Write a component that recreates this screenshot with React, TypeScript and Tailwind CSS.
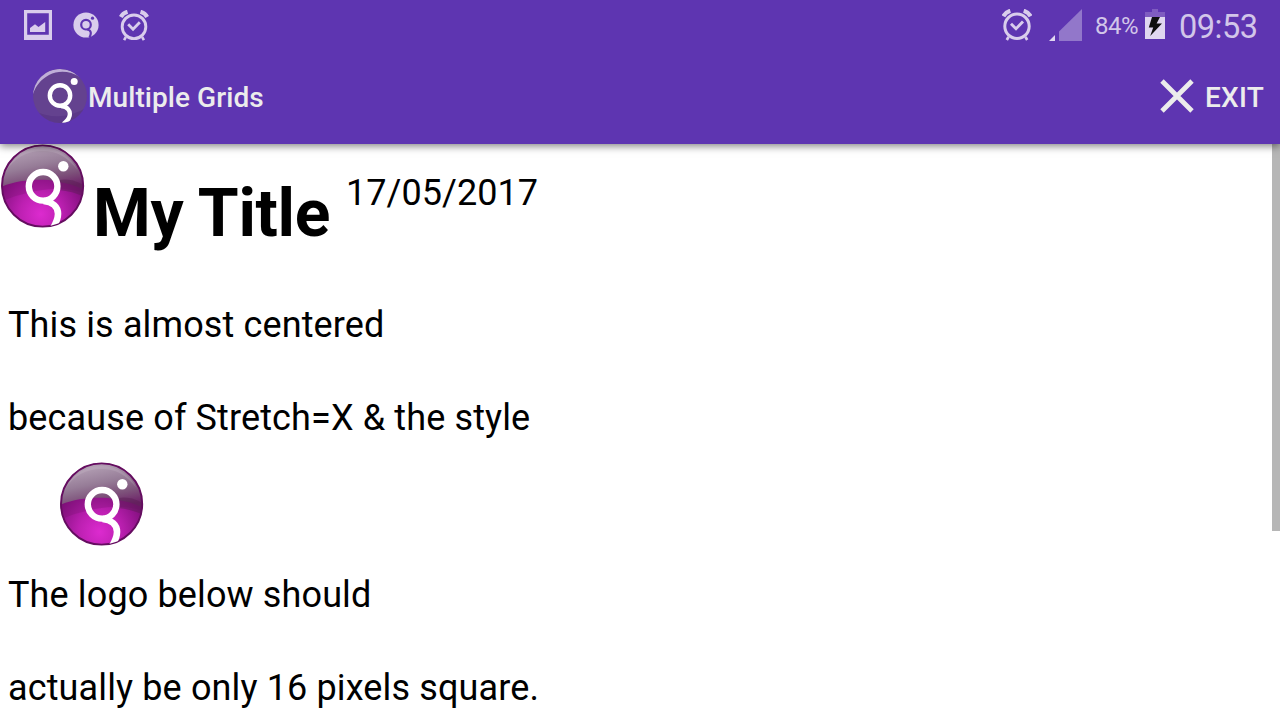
import React from "react";

function Logo({ id }: { id: string }) {
  return (
    <svg className="block h-[84px] w-[85px] shrink-0" viewBox="-0.6 0 85 84">
      <defs>
        <radialGradient id={`${id}-base`} gradientUnits="userSpaceOnUse" cx="40" cy="70" r="52">
          <stop offset="0" stopColor="#dc2bcf" />
          <stop offset="0.4" stopColor="#bd20b2" />
          <stop offset="0.75" stopColor="#93148d" />
          <stop offset="1" stopColor="#760c72" />
        </radialGradient>
        <linearGradient id={`${id}-gloss`} gradientUnits="userSpaceOnUse" x1="32" y1="0" x2="42" y2="48">
          <stop offset="0" stopColor="#b9a7ba" />
          <stop offset="0.45" stopColor="#967c97" />
          <stop offset="0.75" stopColor="#7c4f79" />
          <stop offset="1" stopColor="#6e2269" />
        </linearGradient>
        <clipPath id={`${id}-clip`}>
          <circle cx="42" cy="42" r="40.5" />
        </clipPath>
      </defs>
      <circle cx="42" cy="42" r="41" fill={`url(#${id}-base)`} />
      <g clipPath={`url(#${id}-clip)`}>
        <path d="M0 0H84V49C66 43 48 44 30 48C18 51 8 54 0 58Z" fill="#711069" opacity="0.25" />
        <path d="M0 0H84V46C72 40 60 38 48 36C30 35 15 37 0 43Z" fill={`url(#${id}-gloss)`} />
        <path d="M5 28C12 12 26 4 42 4C57 4 70 12 77 26C66 12 55 7 42 7C27 7 14 13 5 28Z" fill="#d0c3d0" opacity="0.22" />
        <path d="M58 36C70 34 78 38 84 42V53C76 49 68 47 58 46Z" fill="#581c52" opacity="0.45" />
      </g>
      <circle cx="42" cy="42" r="40.6" fill="none" stroke="#650d60" strokeWidth="1.9" />
      <g clipPath={`url(#${id}-clip)`}>
        <circle cx="42.5" cy="42.3" r="14.3" fill="none" stroke="#fff" strokeWidth="6.4" />
        <path d="M43 57C52 58 57.5 63 57.4 70C57.4 75 55.5 79 52 85" fill="none" stroke="#fff" strokeWidth="6.6" />
      </g>
      <circle cx="62.7" cy="22.3" r="5.2" fill="#fff" />
    </svg>
  );
}

function AppIcon() {
  return (
    <svg className="block h-[56px] w-[56px] shrink-0" viewBox="0 0 56 56">
      <defs>
        <clipPath id="bar-clip">
          <circle cx="28" cy="28" r="27" />
        </clipPath>
      </defs>
      <circle cx="28" cy="28" r="27" fill="#64428f" />
      <g clipPath="url(#bar-clip)">
        <path d="M0 42Q28 56 56 39V56H0Z" fill="#553284" opacity="0.6" />
        <path d="M1 26C1 11 13 1 28 1C36 1 43 4 48 9C38 3 27 2 17 7C8 12 4 18 1 26Z" fill="#c0afd8" />
        <circle cx="28" cy="27.5" r="10.2" fill="none" stroke="#fff" strokeWidth="4.4" />
        <path d="M29 38.2C36 38.5 38.5 43 37.7 47.5C37.2 50.5 35.2 53 31.5 56" fill="none" stroke="#fff" strokeWidth="4.3" />
      </g>
      <circle cx="42.2" cy="13.5" r="3.5" fill="#fff" />
    </svg>
  );
}

function Alarm({ className }: { className: string }) {
  return (
    <svg className={className} viewBox="0 0 30 32" fill="none" stroke="#d9cdec">
      <circle cx="15" cy="17.3" r="12.2" strokeWidth="3" />
      <path d="M9 14.8L14 19.8L21 12.6" strokeWidth="2.9" />
      <path d="M1.4 7.2Q3.5 3.2 8.3 1.8M28.6 7.2Q26.5 3.2 21.7 1.8" strokeWidth="4.2" />
      <path d="M6.5 28L4.8 31M23.5 28L25.2 31" strokeWidth="2.7" />
    </svg>
  );
}

function StatusBar() {
  return (
    <div className="flex h-[50px] items-start justify-between pl-6 pr-[21px] text-[#d2c6e9]">
      <div className="flex items-start">
        <svg className="mt-[10px] block h-[30px] w-7" viewBox="0 0 28 30">
          <path fillRule="evenodd" fill="#d9cdec" d="M0 0H28V30H0ZM3.2 3.2V24.8H24.8V3.2Z" />
          <path d="M6 22V18L11 14.2L14.5 17L21.2 12V22Z" fill="#d9cdec" />
        </svg>
        <svg className="ml-[21px] mt-3 block h-[26px] w-[26px]" viewBox="0 0 26 26">
          <circle cx="13" cy="13" r="12.6" fill="#d9cdec" />
          <circle cx="13" cy="12.7" r="4.8" fill="none" stroke="#5e35b1" strokeWidth="2.2" />
          <path d="M14 17.5C18 18 18.8 21 16.5 25.5" fill="none" stroke="#5e35b1" strokeWidth="2.2" />
          <circle cx="19.5" cy="6.2" r="1.6" fill="#5e35b1" />
        </svg>
        <Alarm className="ml-5 mt-2.5 block h-[31px] w-[30px]" />
      </div>
      <div className="flex items-start">
        <Alarm className="mt-[9px] block h-8 w-[30px]" />
        <svg className="ml-4 mt-[9px] block h-8 w-[34px]" viewBox="0 0 34 32">
          <path d="M34 0V32H11V22.5Z" fill="#9277ca" />
          <path d="M7 26V32H1Z" fill="#e0d7f0" />
        </svg>
        <span className="ml-[13px] mt-[11px] w-[50px] whitespace-nowrap text-[24px] leading-[30px] tracking-[-0.45px]">84%</span>
        <svg className="mt-[9px] block h-[30px] w-5" viewBox="0 0 20 30">
          <path d="M7 0H13V3H20V8H0V3H7Z" fill="#7f5cc0" />
          <path d="M0 8H20V30H0Z" fill="#e0d7f0" />
          <path d="M7 8H15L11.6 14.6H17L5.2 27L8.2 18.5H3.8Z" fill="#101010" />
        </svg>
        <span className="ml-[14px] mt-[7px] w-[80px] whitespace-nowrap text-[32.5px] leading-10 font-normal tracking-[-0.5px]">09:53</span>
      </div>
    </div>
  );
}

export default function App() {
  return (
    <div className="flex h-[720px] w-[1280px] flex-col overflow-hidden bg-white font-['Roboto','Liberation_Sans',sans-serif] text-black">
      <header className="relative z-10 h-36 shrink-0 bg-[#5e35b1] shadow-[0_2px_8px_rgba(0,0,0,0.5)]">
        <StatusBar />
        <div className="flex h-[94px] items-start justify-between pl-8 pr-4 text-[#ececec]">
          <div className="flex items-start pt-[18px]">
            <AppIcon />
            <h1 className="mt-[10px] whitespace-nowrap text-[28px] leading-[40px] font-medium tracking-[0.07px]">Multiple Grids</h1>
          </div>
          <button className="flex items-start pt-[28px] text-[28px] leading-10 font-medium tracking-[0.2px]">
            <svg className="mr-[11px] mt-[1px] block h-[34px] w-[34px]" viewBox="0 0 34 34">
              <path d="M2 2L32 32M32 2L2 32" stroke="#ececec" strokeWidth="4.8" />
            </svg>
            EXIT
          </button>
        </div>
      </header>
      <div className="flex min-h-0 flex-1 justify-between">
        <main className="text-[36px] tracking-[0.13px]">
          <div className="flex h-[135px] items-start">
            <Logo id="title" />
            <h2 className="ml-[8px] mt-[30px] w-[253px] whitespace-nowrap text-[66px] leading-[80px] font-bold tracking-[-0.3px]">My Title</h2>
            <span className="mt-7 whitespace-nowrap leading-[42px] tracking-[0.05px]">17/05/2017</span>
          </div>
          <p className="h-[93px] pl-2 leading-[93px] whitespace-nowrap">This is almost centered</p>
          <p className="h-[90px] pl-2 leading-[93px] whitespace-nowrap">because of Stretch=X &amp; the style</p>
          <div className="h-[87px] pl-[59px]">
            <Logo id="cell" />
          </div>
          <p className="h-[93px] pl-2 leading-[93px] whitespace-nowrap">The logo below should</p>
          <p className="h-[93px] pl-2 leading-[93px] whitespace-nowrap">actually be only 16 pixels square.</p>
        </main>
        <div className="h-[387px] w-2 bg-[#b6b6b6]" />
      </div>
    </div>
  );
}
